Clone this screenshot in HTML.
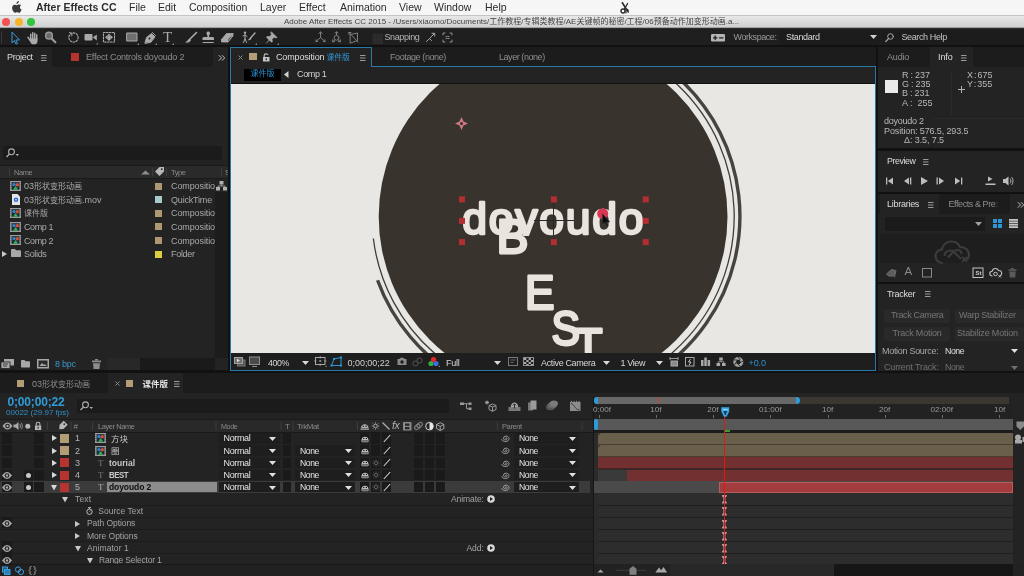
<!DOCTYPE html>
<html lang="zh">
<head>
<meta charset="utf-8">
<title>Adobe After Effects CC 2015</title>
<style>
*{box-sizing:border-box;margin:0;padding:0}
html,body{width:1024px;height:576px;overflow:hidden;background:#111}
body{position:relative;font-family:"Liberation Sans","Noto Sans CJK SC",sans-serif;color:#bdbdbd;font-size:9px;line-height:1;-webkit-font-smoothing:antialiased}
.a{position:absolute}
.t{position:absolute;white-space:nowrap;line-height:1}
svg{position:absolute;overflow:visible}
/* ---------- mac chrome ---------- */
#menubar{left:0;top:0;width:1024px;height:15.500px;background:#f6f6f6;border-bottom:1px solid #c4c4c4}
#menubar .t{color:#2b2b2b;font-size:10.5px;top:2px}
#titlebar{left:0;top:15.500px;width:1024px;height:12px;background:linear-gradient(#e8e8e8,#d0d0d0);border-bottom:1px solid #a0a0a0}
#toolbar{left:0;top:27.500px;width:1024px;height:17.500px;background:#1f1f1f;border-top:1px solid #2c2c2c}
.panel{background:#232323}
.tabs{background:#1c1c1c}
.blue{color:#2d9bd6}
.w{color:#e6e6e6}
.dim{color:#8c8c8c}
</style>
</head>
<body>
<div id="root" style="position:absolute;left:0;top:0;width:1024px;height:576px;overflow:hidden;will-change:transform;transform:translateZ(0)">
<svg width="0" height="0" style="left:-10px;top:-10px">
  <defs>
    <g id="compicon">
      <rect x="0" y="0" width="11" height="10" fill="#9c9c9c"/>
      <rect x="1.600" y="1.200" width="7.800" height="7.600" fill="#1b2a3a"/>
      <circle cx="4" cy="3.600" r="1.700" fill="#2e86d0"/>
      <circle cx="7.300" cy="3.800" r="1.700" fill="#d8502c"/>
      <path d="M3 8.800l2.600-3.800 2.600 3.800z" fill="#35b04a"/>
      <path d="M.5 1.500h.8M.5 3.500h.8M.5 5.500h.8M.5 7.500h.8M9.700 1.500h.8M9.700 3.500h.8M9.700 5.500h.8M9.700 7.500h.8" stroke="#444" stroke-width=".8"/>
    </g>
    <g id="eye">
      <path d="M0 3.500C1.800 1 3.500 0 5 0s3.200 1 5 3.500C8.200 6 6.500 7 5 7S1.800 6 0 3.500z" fill="#a8a8a8"/>
      <circle cx="5" cy="3.500" r="2.300" fill="#1c1c1c"/><circle cx="5" cy="3.500" r="1.200" fill="#a8a8a8"/>
    </g>
    <path id="ddn" d="M0 0h7l-3.500 4z"/>
    <path id="tri-r" d="M0 0l5 3-5 3z"/>
    <path id="tri-d" d="M0 0h6l-3 5.500z"/>
  </defs>
</svg>
<!-- ================= MAC MENU BAR ================= -->
<div id="menubar" class="a">
  <svg style="left:12px;top:1px" width="10" height="12" viewBox="0 0 10 12"><path d="M6.9 0c.1.8-.2 1.500-.7 2-.4.5-1.100.9-1.800.8-.1-.700.300-1.500.700-1.900C5.600.400 6.300 0 6.900 0zM9.300 4.100c-.900.500-1.300 1.300-1.300 2.200 0 1.100.700 2 1.600 2.300-.2.600-.5 1.200-.9 1.800-.5.700-1 1.400-1.800 1.400s-1-.5-1.900-.5-1.200.5-1.900.5c-.800 0-1.400-.800-1.900-1.500C.100 8.700-.3 6.500.600 5.100c.500-.9 1.400-1.400 2.300-1.400.800 0 1.400.5 2 .5.600 0 1.200-.6 2.200-.6.800 0 1.700.3 2.200.5z" fill="#3a3a3a"/></svg>
  <span class="t" style="left:36px;font-weight:bold">After Effects CC</span>
  <span class="t" style="left:129px">File</span>
  <span class="t" style="left:158px">Edit</span>
  <span class="t" style="left:189px">Composition</span>
  <span class="t" style="left:260px">Layer</span>
  <span class="t" style="left:299px">Effect</span>
  <span class="t" style="left:340px">Animation</span>
  <span class="t" style="left:399px">View</span>
  <span class="t" style="left:434px">Window</span>
  <span class="t" style="left:485px">Help</span>
  <svg style="left:620px;top:1.500px" width="10" height="12" fill="none" stroke="#2a2a2a" stroke-linecap="round"><path d="M2.300 .8l5.200 8.200" stroke-width="1.600"/><path d="M7.600 1.500l-3 5.200" stroke-width="1.300"/><circle cx="3" cy="9" r="2" stroke-width="1.400"/><path d="M6 7.500c1.200-.6 2.200 0 2.200 1v2M6 8v3" stroke-width="1.100"/></svg>
</div>
<!-- ================= WINDOW TITLE BAR ================= -->
<div id="titlebar" class="a">
  <div class="a" style="left:2px;top:2px;width:8px;height:8px;border-radius:50%;background:#f0524f"></div>
  <div class="a" style="left:15px;top:2px;width:8px;height:8px;border-radius:50%;background:#f6b42b"></div>
  <div class="a" style="left:27px;top:2px;width:8px;height:8px;border-radius:50%;background:#2fc53c"></div>
  <span class="t" style="left:284px;top:2px;font-size:8px;color:#444">Adobe After Effects CC 2015 - /Users/xiaomo/Documents/工作教程/专辑类教程/AE关键帧的秘密/工程/06预备动作加变形动画.a...</span>
</div>
<!-- ================= TOOLBAR ================= -->
<div id="toolbar" class="a">
  <div class="a" style="left:780px;top:1px;width:100px;height:15px;background:#1c1c1c"></div>
  <div class="a" style="left:881px;top:1px;width:143px;height:15px;background:#1c1c1c"></div>
  <svg style="left:0;top:0" width="1024" height="17" viewBox="0 28 1024 17" fill="none" stroke="#a9a9a9" stroke-width="1.1" stroke-linecap="round" stroke-linejoin="round">
    <!-- grip -->
    <path d="M1.500 31v11" stroke="#3a3a3a" stroke-dasharray="1 1"/>
    <!-- selection arrow -->
    <path d="M12 31.500v10.500l2.400-2.400 1.600 3.600 1.500-.7-1.600-3.500h3.300z" stroke="#3b9ad2" stroke-width="1"/>
    <!-- hand -->
    <g stroke="#a9a9a9" stroke-width="1.500" stroke-linecap="round"><path d="M30.700 33.300v5M32.700 31.800v6M34.700 32.300v6M36.700 33.800v5M28 36.300l2.200 3.200"/></g><path d="M29.800 37.500h7.700v2.500c0 1.500-.8 2.500-1.500 3.200h-4c-1-.8-2.200-2.700-2.200-4z" fill="#a9a9a9" stroke="none"/>
    <!-- zoom -->
    <circle cx="49" cy="34.700" r="3.400" stroke-width="1.400" stroke="#9a9a9a" fill="#6a6a6a"/><path d="M51.700 37.600l3.600 3.700" stroke-width="2.200" stroke="#9a9a9a"/>
    <!-- rotate -->
    <circle cx="73.500" cy="36.500" r="4.600" stroke-dasharray="1.600 1.400"/><path d="M69.500 31.500l2.500 1-.2 2.400" stroke-width="1"/>
    <!-- camera -->
    <rect x="84.500" y="33" width="8" height="6.500" rx="1" fill="#a9a9a9" stroke="none"/><path d="M93 36.200l3.800-2.800v6l-3.800-2.800z" fill="#a9a9a9" stroke="none"/><path d="M96 43.500h2v-2z" fill="#8a8a8a" stroke="none"/>
    <!-- pan behind -->
    <rect x="103.500" y="31.500" width="11" height="9.500" stroke-dasharray="1.600 1.300" stroke-width="1.100" stroke="#a9a9a9"/><g fill="#a9a9a9" stroke="none"><rect x="107.300" y="34.500" width="3.500" height="3.500"/><path d="M105 36.250l2.300-2v4zM113 36.250l-2.300-2v4zM109 32.500l-2 2h4zM109 40l-2-2h4z"/></g>
    <!-- rect -->
    <rect x="127" y="32" width="10" height="8" fill="#6f6f6f" stroke="#a9a9a9" stroke-width="1"/><path d="M137 44h2v-2z" fill="#8a8a8a" stroke="none"/>
    <!-- pen -->
    <path d="M145 42l1.500-5.500 5-4 3.500 3.500-4 5zM152.500 31.500l3 3" fill="#a9a9a9" stroke="#a9a9a9" stroke-width="1"/><circle cx="149.500" cy="37.500" r="1" fill="#1f1f1f" stroke="none"/><path d="M155 44h2v-2z" fill="#8a8a8a" stroke="none"/>
    <!-- brush -->
    <path d="M196.500 31.500l-6.500 6.500" stroke-width="1.600"/><path d="M189.500 37.500l1.500 1.500c-.5 2-3 3-6 2.500 2-.5 2.500-3 4.500-4z" fill="#a9a9a9" stroke="none"/>
    <!-- stamp -->
    <path d="M206.500 32c0-2 3.500-2 3.500 0 0 1.500-1 2-1 4h3.500c1 0 1.500.5 1.500 1.500v1.500h-11.500v-1.500c0-1 .5-1.500 1.500-1.500h3.500c0-2-1-2.500-1-4zM202.700 41h11v1h-11z" fill="#a9a9a9" stroke="none"/>
    <!-- eraser -->
    <path d="M221.500 38.500l5-6h6.500l-5 6zM221.500 38.500v2.500h6.500v-2.500M228 41l5-6v-2.500" fill="#a9a9a9" stroke="#a9a9a9" stroke-width=".8"/>
    <!-- roto brush -->
    <circle cx="245" cy="31.800" r="1.200" fill="#a9a9a9" stroke="none"/><path d="M245 33.500v4l-1.500 4M245 37.500l1.500 4M243 35l2-1 2 1.500" stroke-width="1"/><path d="M255 32l-4.500 5" stroke-width="1.400"/><path d="M250.500 36.500l1 1c-.5 1.500-2.500 2-4 1.500 1.500-.5 2-2 3-2.500z" fill="#a9a9a9" stroke="none"/><path d="M255 44h2v-2z" fill="#8a8a8a" stroke="none"/>
    <!-- pin -->
    <path d="M271.500 31l5.500 5.500-1.200.3-1.800-.6-2 2 .3 2.200-.8.800-5-5 .8-.8 2.200.3 2-2-.6-1.800zM269.500 38.500l-2.800 3.500" fill="#a9a9a9" stroke="#a9a9a9" stroke-width=".8"/><path d="M277 44h2v-2z" fill="#8a8a8a" stroke="none"/>
    <!-- axis icons -->
    <g stroke="#7f7f7f" stroke-width="1">
      <path d="M320.500 31v5.500l-4.500 4M320.500 36.500l4.500 4M319 32.500l1.500-1.700 1.500 1.700M316 38.800v1.700h1.700M325 38.800v1.700h-1.700"/>
      <path d="M336.500 31v3M333 40.500l1.800-1.500M340 40.500l-1.800-1.500M335 32.200l1.500-1.500 1.500 1.500M332.600 38.800v1.900h1.900M340.400 38.800v1.900h-1.900"/><circle cx="336.500" cy="36.800" r="2.400"/>
      <path d="M350.500 33.500l7-1.500v7.500l-7 2.500zM349 31.500l9 9.500M349 31.500h2M349 31.500v2"/>
    </g>
    <!-- snapping -->
    <rect x="372.500" y="32.500" width="10.500" height="10.500" fill="#2b2b2b" stroke="none"/>
    <path d="M426.500 40.500l3-3 2 2M429.500 37.500l5-5M432 32.300h2.700v2.700" stroke-width="1"/>
    <path d="M443 34v-2h2M450 32h2v2M452 39v2h-2M445 41h-2v-2M446 35.500h1M448 35.500h1M446 37.500h1M448 37.500h1" stroke="#8f8f8f" stroke-width="1"/>
    <!-- workspace icon -->
    <rect x="711" y="33" width="14" height="7.500" rx="1.200" fill="#b5b5b5" stroke="none"/><path d="M713.500 36.800h3.500M715.200 35v3.500M719.500 36.800h3.500" stroke="#1f1f1f" stroke-width="1.300"/>
    <!-- search -->
    <circle cx="890.500" cy="35.500" r="2.800" stroke-width="1"/><path d="M888.500 37.700l-2.700 2.800" stroke-width="1.200"/>
  </svg>
  <span class="t" style="left:163px;top:1px;font-family:'Liberation Serif',serif;font-size:15px;color:#a9a9a9">T</span>
  <svg style="left:172px;top:14px" width="2" height="2"><path d="M0 2h2v-2z" fill="#8a8a8a"/></svg>
  <span class="t" style="left:384.500px;top:4px;font-size:9px;color:#b4b4b4;letter-spacing:-0.393px/*fit*/">Snapping</span>
  <span class="t" style="left:733.500px;top:4px;font-size:9px;color:#9a9a9a;letter-spacing:-0.436px/*fit*/">Workspace:</span>
  <span class="t" style="left:786px;top:4px;font-size:9px;color:#d8d8d8;letter-spacing:-0.366px/*fit*/">Standard</span>
  <svg style="left:870px;top:6px" width="7" height="4"><path d="M0 0h7l-3.500 4z" fill="#d0d0d0"/></svg>
  <span class="t" style="left:901.500px;top:4px;font-size:9px;color:#c4c4c4;letter-spacing:-0.385px/*fit*/">Search Help</span>
</div>

<!-- ================= PROJECT PANEL ================= -->
<div id="project" class="a panel" style="left:0;top:47px;width:228px;height:323px;overflow:hidden">
  <div class="a tabs" style="left:0;top:0;width:213px;height:20px;border-radius:0 0 3px 3px"></div>
  <div class="a panel" style="left:0;top:0;width:52px;height:20px"></div>
  <span class="t w" style="left:7px;top:6px;font-size:9px;color:#dcdcdc;letter-spacing:-0.324px/*fit*/">Project</span>
  <svg style="left:41px;top:8px" width="6" height="6"><path d="M0 .5h5.500M0 3h5.500M0 5.500h5.500" stroke="#9a9a9a" stroke-width="1"/></svg>
  <div class="a" style="left:71px;top:6px;width:8px;height:8px;background:#b5342f"></div>
  <span class="t" style="left:86px;top:6px;font-size:9px;color:#8e8e8e;letter-spacing:-0.206px/*fit*/">Effect Controls doyoudo 2</span>
  <svg style="left:217.500px;top:6.500px" width="8" height="8" fill="none" stroke="#c0c0c0" stroke-width="1"><path d="M.8 1.200l2.700 2.700-2.700 2.700M4 1.200l2.700 2.700-2.700 2.700"/></svg>
  <!-- search -->
  <div class="a" style="left:3px;top:99px;width:219px;height:14px;background:#1b1b1b;border-radius:2px"></div>
  <svg style="left:6px;top:101px" width="14" height="10" fill="none" stroke="#b0b0b0"><circle cx="5.500" cy="3.800" r="2.900" stroke-width="1.100"/><path d="M3.500 6l-3 3" stroke-width="1.300"/><path d="M9.500 6h3.500l-1.750 2z" fill="#b0b0b0" stroke="none"/></svg>
  <!-- header -->
  <div class="a" style="left:0;top:118px;width:228px;height:14px;background:#2a2a2a;border-top:1px solid #191919;border-bottom:1px solid #191919"></div>
  <div class="a" style="left:9px;top:121px;width:1px;height:8px;background:#3c3c3c"></div>
  <span class="t" style="left:14px;top:121.500px;font-size:8px;color:#8a8a8a;letter-spacing:-0.45px/*fit*/;transform-origin:0 0;transform:scaleX(0.9277)/*fitfs*/">Name</span>
  <svg style="left:141px;top:123px" width="9" height="5"><path d="M0 4.500h9l-4.500-4z" fill="#8e8e8e"/></svg>
  <div class="a" style="left:152px;top:121px;width:1px;height:8px;background:#3c3c3c"></div>
  <svg style="left:154.500px;top:120px" width="9" height="9"><path d="M4.500 0h4.500v4.500l-4.500 4.500-4.500-4.500z" fill="#b8b8b8"/><circle cx="6.800" cy="2.200" r=".9" fill="#2a2a2a"/></svg>
  <div class="a" style="left:166px;top:121px;width:1px;height:8px;background:#3c3c3c"></div>
  <span class="t" style="left:171px;top:121.500px;font-size:8px;color:#8a8a8a;letter-spacing:-0.45px/*fit*/;transform-origin:0 0;transform:scaleX(0.9398)/*fitfs*/">Type</span>
  <div class="a" style="left:221px;top:121px;width:1px;height:8px;background:#3c3c3c"></div>
  <span class="t" style="left:225px;top:121.500px;font-size:8px;color:#8a8a8a">S</span>
  <!-- scrollbar gutter -->
  <div class="a" style="left:215px;top:145px;width:13px;height:166px;background:#1c1c1c"></div>
  <!-- rows -->
  <svg style="left:10px;top:134px" width="11" height="10"><use href="#compicon"/></svg>
  <span class="t" style="left:24px;top:135.0px;font-size:9px;color:#a9a9a9">03<span style="font-size:8px">形状变形动画</span></span>
  <div class="a" style="left:155px;top:135.500px;width:7px;height:7px;background:#ad9873"></div>
  <span class="t" style="left:171px;top:135.0px;font-size:9px;color:#a9a9a9;letter-spacing:-0.103px/*fit*/">Compositio</span>
  <svg style="left:216px;top:134px" width="11" height="10" fill="#b0b0b0"><rect x="3.500" y="0" width="4" height="3.500"/><rect x="0" y="6" width="4" height="3.500"/><rect x="7" y="6" width="4" height="3.500"/><path d="M5.500 3.500v1.500M2 6v-1h7v1" stroke="#b0b0b0" fill="none" stroke-width=".8"/></svg>

  <svg style="left:12px;top:147px" width="8" height="11"><path d="M0 0h5.500l2.500 2.500v8.500h-8z" fill="#e4e4e4"/><circle cx="4" cy="5.800" r="2.300" fill="#2a6fd0"/><circle cx="4" cy="5.800" r="1" fill="#9fc4f0"/></svg>
  <span class="t" style="left:24px;top:148.5px;font-size:9px;color:#a9a9a9">03<span style="font-size:8px">形状变形动画</span>.mov</span>
  <div class="a" style="left:155px;top:149px;width:7px;height:7px;background:#a5ccc8"></div>
  <span class="t" style="left:171px;top:148.5px;font-size:9px;color:#a9a9a9;letter-spacing:-0.186px/*fit*/">QuickTime</span>

  <svg style="left:10px;top:161px" width="11" height="10"><use href="#compicon"/></svg>
  <span class="t" style="left:24px;top:162.0px;font-size:9px;color:#a9a9a9"><span style="font-size:8px">课件版</span></span>
  <div class="a" style="left:155px;top:162.500px;width:7px;height:7px;background:#ad9873"></div>
  <span class="t" style="left:171px;top:162.0px;font-size:9px;color:#a9a9a9;letter-spacing:-0.103px/*fit*/">Compositio</span>

  <svg style="left:10px;top:174.500px" width="11" height="10"><use href="#compicon"/></svg>
  <span class="t" style="left:24px;top:176.0px;font-size:9px;color:#a9a9a9;letter-spacing:-0.378px/*fit*/">Comp 1</span>
  <div class="a" style="left:155px;top:176px;width:7px;height:7px;background:#ad9873"></div>
  <span class="t" style="left:171px;top:176.0px;font-size:9px;color:#a9a9a9;letter-spacing:-0.103px/*fit*/">Compositio</span>

  <svg style="left:10px;top:188px" width="11" height="10"><use href="#compicon"/></svg>
  <span class="t" style="left:24px;top:189.5px;font-size:9px;color:#a9a9a9;letter-spacing:-0.378px/*fit*/">Comp 2</span>
  <div class="a" style="left:155px;top:189.500px;width:7px;height:7px;background:#ad9873"></div>
  <span class="t" style="left:171px;top:189.5px;font-size:9px;color:#a9a9a9;letter-spacing:-0.103px/*fit*/">Compositio</span>

  <svg style="left:2px;top:204px" width="6" height="6"><use href="#tri-r" fill="#c8c8c8"/></svg>
  <svg style="left:11px;top:202px" width="10" height="8"><path d="M0 1c0-.6.400-1 1-1h3l1 1.200h4c.6 0 1 .4 1 1v4.800c0 .6-.4 1-1 1h-8c-.6 0-1-.4-1-1z" fill="#a8a8a8"/></svg>
  <span class="t" style="left:24px;top:203.0px;font-size:9px;color:#a9a9a9;letter-spacing:-0.336px/*fit*/">Solids</span>
  <div class="a" style="left:155px;top:203.500px;width:7px;height:7px;background:#dccf3f"></div>
  <span class="t" style="left:171px;top:203.0px;font-size:9px;color:#a9a9a9;letter-spacing:-0.294px/*fit*/">Folder</span>
  <!-- bottom bar -->
  <div class="a" style="left:107px;top:311px;width:33px;height:12px;background:#282828"></div>
  <div class="a" style="left:140px;top:311px;width:75px;height:12px;background:#1a1a1a"></div>
  <svg style="left:1px;top:312px" width="13" height="10" fill="#a8a8a8"><rect x="3" y="0" width="10" height="6.500"/><rect x="0" y="3" width="9" height="6.500" stroke="#232323" stroke-width=".8"/><path d="M2 5h5M2 7h4" stroke="#232323" stroke-width=".8"/></svg>
  <svg style="left:21px;top:313px" width="10" height="8"><path d="M0 1c0-.6.400-1 1-1h2.500l1 1.200h3.500c.6 0 1 .4 1 1v4.300c0 .6-.4 1-1 1h-7c-.6 0-1-.4-1-1z" fill="#a8a8a8"/></svg>
  <svg style="left:37px;top:312px" width="12" height="10"><rect x="0" y="0" width="12" height="9.500" fill="#a8a8a8"/><rect x="1.500" y="1.500" width="9" height="6.500" fill="#2a2a2a"/><path d="M2.500 7l2.500-3 2 2 1-1 1.500 2z" fill="#a8a8a8"/></svg>
  <span class="t" style="left:55px;top:312.500px;font-size:9px;color:#3b96cc;letter-spacing:-0.256px/*fit*/">8 bpc</span>
  <svg style="left:92px;top:312px" width="9" height="10" fill="#8c8c8c"><rect x="3" y="0" width="3" height="1.500"/><rect x="0" y="1.500" width="9" height="1.800"/><path d="M1 4.200h7l-.6 5.800h-5.800z"/></svg>
</div>

<!-- ================= COMPOSITION VIEWER ================= -->
<div id="viewer" class="a panel" style="left:230px;top:47px;width:646px;height:324px">
  <div class="a tabs" style="left:0;top:0;width:646px;height:20px"></div>
  <!-- active tab -->
  <div class="a panel" style="left:0;top:0;width:142px;height:20px;border:1px solid #2a78a6;border-bottom:none"></div>
  <svg style="left:8px;top:8px" width="5" height="5" stroke="#8a8a8a" stroke-width="1"><path d="M.5 .5l4 4M4.500 .5l-4 4"/></svg>
  <div class="a" style="left:19px;top:5.500px;width:7.500px;height:7.500px;background:#b39d76"></div>
  <svg style="left:33px;top:5.500px" width="7" height="9" fill="none"><path d="M1.200 4v-1.600c0-2 3.600-2 3.600-.3" stroke="#c4c4c4" stroke-width="1.100"/><rect x="0" y="4" width="6.500" height="4.500" fill="#c4c4c4"/><rect x="2.700" y="5.300" width="1.200" height="1.800" fill="#232323"/></svg>
  <span class="t" style="left:46px;top:6px;font-size:9px;color:#dedede;letter-spacing:-0.148px/*fit*/">Composition</span>
  <span class="t" style="left:96.500px;top:6.500px;font-size:7.800px;color:#3197d3">课件版</span>
  <svg style="left:130px;top:7.500px" width="6" height="6"><path d="M0 .5h5.500M0 3h5.500M0 5.500h5.500" stroke="#9a9a9a" stroke-width="1"/></svg>
  <span class="t" style="left:160px;top:6px;font-size:9px;color:#8e8e8e;letter-spacing:-0.403px/*fit*/">Footage (none)</span>
  <span class="t" style="left:269px;top:6px;font-size:9px;color:#8e8e8e;letter-spacing:-0.444px/*fit*/">Layer (none)</span>
  <!-- breadcrumb -->
  <div class="a" style="left:14px;top:21.500px;width:37px;height:12.500px;background:#000"></div>
  <span class="t" style="left:20.500px;top:23.300px;font-size:8px;color:#2f93cf">课件版</span>
  <svg style="left:54px;top:24px" width="5" height="7"><path d="M4.500 0v7l-4.500-3.500z" fill="#d0d0d0"/></svg>
  <span class="t" style="left:67px;top:23px;font-size:9px;color:#d4d4d4;letter-spacing:-0.369px/*fit*/">Comp 1</span>
  <div class="a" style="left:1px;top:36px;width:644px;height:1px;background:#111"></div>
  <!-- stage -->
  <div class="a" id="stage" style="left:1px;top:37px;width:644px;height:269px;background:#e9e7e3;overflow:hidden">
    <svg style="left:0;top:0" width="644" height="269" viewBox="231 84 644 269">
      <circle cx="553.1" cy="216.4" r="174.4" fill="#38332d"/>
      <!-- outer rings -->
      <path d="M553.10 35.30A181.10 181.10 0 1 1 373.35 238.47" fill="none" stroke="#403d39" stroke-width="1.300"/>
      <path d="M553.10 29.60A186.80 186.80 0 1 1 377.57 280.29" fill="none" stroke="#474440" stroke-width="3.400"/>
      <!-- animated letters -->
      <g font-family="'Liberation Sans',sans-serif" fill="#e9e5de" stroke="#e9e5de" stroke-width="2.800" stroke-linejoin="round" stroke-linecap="round">
        <clipPath id="cpd"><rect x="450" y="190" width="210" height="46"/></clipPath><text id="dyd" clip-path="url(#cpd)" x="462.300" y="233.900" font-size="44.500" letter-spacing="1.750" stroke-width="2.500">doyoudo</text>
        <text id="lB" x="496.500" y="252.600" font-size="49" textLength="32" lengthAdjust="spacingAndGlyphs">B</text>
        <text id="lE" x="525" y="309.300" font-size="49" textLength="29.500" lengthAdjust="spacingAndGlyphs">E</text>
        <text id="lS" x="551.500" y="345.200" font-size="49" textLength="28.500" lengthAdjust="spacingAndGlyphs">S</text>
        <text id="lT" x="574" y="362" font-size="49" textLength="28.500" lengthAdjust="spacingAndGlyphs">T</text>
      </g>
      <!-- anchor crosshair -->
      <path d="M534 220.500h40M553.500 203v33" stroke="#2a2622" stroke-width="1" fill="none"/>
      <!-- selection handles -->
      <g fill="#b32e30"><rect x="459" y="196.4" width="6" height="6"/><rect x="459" y="217.9" width="6" height="6"/><rect x="459" y="239.1" width="6" height="6"/><rect x="550.9" y="196.4" width="6" height="6"/><rect x="550.9" y="239.1" width="6" height="6"/><rect x="642.75" y="196.4" width="6" height="6"/><rect x="642.75" y="217.9" width="6" height="6"/><rect x="642.75" y="239.1" width="6" height="6"/></g>
      <!-- pink marker -->
      <g transform="translate(461.500 123.600)"><path d="M0-6.500l2 4.500 4.500 2-4.500 2-2 4.500-2-4.500-4.500-2 4.500-2z" fill="#cf7b82"/><circle r="1.500" fill="#3a2c2a"/></g>
      <!-- red dot + cursor -->
      <circle cx="602.700" cy="213.700" r="5.500" fill="#da3553"/>
      <path d="M602.300 213.500v11.500l2.600-2.400 1.800 4 1.600-.7-1.800-3.900h3.500z" fill="#0c0c0c" stroke="#555" stroke-width=".4"/>
    </svg>
  </div>
  <!-- footer -->
  <div class="a" style="left:1px;top:306px;width:644px;height:17px;background:#1e1e1e"></div>
  <svg style="left:1px;top:306px" width="644" height="17" viewBox="231 353 644 17" fill="none" stroke="#8e8e8e" stroke-width="1">
    <rect x="237.500" y="360" width="7.500" height="6" fill="#555" stroke="#777"/><rect x="234.500" y="357.500" width="8" height="6" fill="#6e6e6e" stroke="#a0a0a0"/><path d="M237 358.800v3.400l3-1.700z" fill="#ddd" stroke="none"/>
    <rect x="249.500" y="357" width="10" height="7.500" fill="#4a4a4a" stroke="#8e8e8e"/><path d="M252 366.500h5" stroke="#8e8e8e"/>
    <rect x="315.500" y="357.500" width="9.500" height="7" stroke="#a8a8a8"/><path d="M320.200 356v2.500M320.200 363.500v2.500M314 361h2.500M324 361h2.500M319 361h2.400M320.200 360v2" stroke="#a8a8a8" stroke-width=".8"/><path d="M325 367h1.500v-1.500z" fill="#a8a8a8" stroke="none"/>
    <path d="M331.500 365.500l2.500-6.500 7-1.500v8z" stroke="#2d95d8"/><g fill="#2d95d8" stroke="none"><rect x="330.500" y="364.500" width="2" height="2"/><rect x="333" y="358" width="2" height="2"/><rect x="340" y="356.500" width="2" height="2"/><rect x="340" y="364.500" width="2" height="2"/></g>
    <path d="M397.500 359h2l1-1.200h3l1 1.200h2v6h-9z" fill="#8a8a8a" stroke="none"/><circle cx="402" cy="362" r="1.700" fill="#1e1e1e" stroke="none"/>
    <g stroke="#4a4a4a" stroke-width="1.100"><circle cx="415.500" cy="363.500" r="2.500"/><circle cx="419.500" cy="360.500" r="2.500"/></g>
    <circle cx="431" cy="363.500" r="2.600" fill="#2fb03c" stroke="none"/><circle cx="436" cy="363.500" r="2.600" fill="#3a6fe8" stroke="none"/><circle cx="433.500" cy="359.500" r="2.600" fill="#e02828" stroke="none"/><path d="M438.500 367h1.500v-1.500z" fill="#a8a8a8" stroke="none"/>
    <rect x="508.500" y="357.500" width="9" height="8" stroke="#7a7a7a"/><path d="M510.500 360h5M510.500 362.500h3" stroke="#7a7a7a" stroke-width=".8"/>
    <rect x="523.500" y="357.500" width="10" height="8" stroke="#8e8e8e"/><g fill="#a8a8a8" stroke="none"><rect x="524" y="358" width="2.300" height="2"/><rect x="528.600" y="358" width="2.300" height="2"/><rect x="526.300" y="360" width="2.300" height="2"/><rect x="530.900" y="360" width="2.300" height="2"/><rect x="524" y="362" width="2.300" height="2"/><rect x="528.600" y="362" width="2.300" height="2"/><rect x="526.300" y="364" width="2.300" height="1.500"/><rect x="530.900" y="364" width="2.300" height="1.500"/></g>
    <g stroke="#a8a8a8"><path d="M670 358.500h8M670 357v3M678 357v3" stroke-width=".9"/><rect x="671" y="361" width="6.500" height="5" fill="#8a8a8a" stroke="#a8a8a8"/></g>
    <rect x="685.500" y="357.500" width="8.500" height="8.500" stroke="#a8a8a8"/><path d="M690.500 359l-2 3h2.500l-1.800 3" stroke="#d0d0d0" stroke-width=".9"/>
    <g fill="#a8a8a8" stroke="none"><rect x="701" y="360" width="2.500" height="6"/><rect x="704.300" y="357.500" width="2.500" height="8.500"/><rect x="707.600" y="360" width="2.500" height="6"/></g>
    <g fill="#a8a8a8" stroke="none"><rect x="719.200" y="357.500" width="3.600" height="3"/><rect x="716.500" y="363" width="3.600" height="3"/><rect x="722" y="363" width="3.600" height="3"/></g><path d="M721 360.500v1.200M718.300 363v-1.300h5.500v1.300" stroke="#a8a8a8" stroke-width=".8"/>
    <circle cx="738.300" cy="362" r="5" fill="#a0a0a0" stroke="none"/><circle cx="738.300" cy="362" r="2.200" fill="#1e1e1e" stroke="none"/><path d="M738.300 357l2 3M743 361l-3.300 2M740.500 366.500l-2.800-2.600M734.500 365.300l1.800-3.400M734 359.800l3.800.4" stroke="#1e1e1e" stroke-width=".8"/>
  </svg>
  <span class="t" style="left:37.500px;top:311.700px;font-size:9px;color:#d8d8d8;letter-spacing:-0.45px/*fit*/;transform-origin:0 0;transform:scaleX(0.9791)/*fitfs*/">400%</span>
  <svg style="left:72px;top:314.200px" width="7" height="4"><use href="#ddn" fill="#d8d8d8"/></svg>
  <span class="t" style="left:117.500px;top:311.700px;font-size:9px;color:#d0d0d0;letter-spacing:-0.035px/*fit*/">0;00;00;22</span>
  <span class="t" style="left:216px;top:311.700px;font-size:9px;color:#d8d8d8;letter-spacing:-0.229px/*fit*/">Full</span>
  <svg style="left:264px;top:314.200px" width="7" height="4"><use href="#ddn" fill="#d8d8d8"/></svg>
  <span class="t" style="left:311px;top:311.700px;font-size:9px;color:#d8d8d8;letter-spacing:-0.364px/*fit*/">Active Camera</span>
  <svg style="left:373px;top:314.200px" width="7" height="4"><use href="#ddn" fill="#d8d8d8"/></svg>
  <span class="t" style="left:390.500px;top:311.700px;font-size:9px;color:#d8d8d8;letter-spacing:-0.377px/*fit*/">1 View</span>
  <svg style="left:426px;top:314.200px" width="7" height="4"><use href="#ddn" fill="#d8d8d8"/></svg>
  <span class="t" style="left:518.500px;top:311.700px;font-size:9px;color:#2f93cf;letter-spacing:-0.07px/*fit*/">+0.0</span>
  <div class="a" style="left:0;top:19px;width:646px;height:305px;border:1px solid #2a78a6;border-top:none"></div>
  <div class="a" style="left:141px;top:19px;width:505px;height:1px;background:#2a78a6"></div>
</div>

<!-- ================= RIGHT PANELS ================= -->
<div id="info" class="a panel" style="left:878px;top:47px;width:146px;height:101px;overflow:hidden">
  <div class="a tabs" style="left:0;top:0;width:146px;height:20px"></div>
  <div class="a panel" style="left:52px;top:0;width:43px;height:20px"></div>
  <span class="t" style="left:9px;top:6px;font-size:9px;color:#8e8e8e;letter-spacing:-0.166px/*fit*/">Audio</span>
  <span class="t" style="left:60px;top:6px;font-size:9px;color:#dedede;letter-spacing:-0.079px/*fit*/">Info</span>
  <svg style="left:83px;top:8px" width="6" height="6"><path d="M0 .5h5.500M0 3h5.500M0 5.500h5.500" stroke="#9a9a9a" stroke-width="1"/></svg>
  <div class="a" style="left:7px;top:33px;width:13px;height:13px;background:#ebebeb"></div>
  <div class="a" style="left:73px;top:25px;width:1px;height:42px;background:#2c2c2c"></div>
  <div class="a" style="left:55px;top:71px;width:91px;height:1px;background:#2a2a2a"></div>
  <span class="t" style="left:24px;top:23.7px;font-size:9px;color:#b9b9b9;word-spacing:-.5px">R : 237</span>
  <span class="t" style="left:24px;top:33.0px;font-size:9px;color:#b9b9b9;word-spacing:-.5px">G : 235</span>
  <span class="t" style="left:24px;top:42.4px;font-size:9px;color:#b9b9b9;word-spacing:-.5px">B : 231</span>
  <span class="t" style="left:24px;top:52.2px;font-size:9px;color:#b9b9b9">A :&nbsp; 255</span>
  <span class="t" style="left:89px;top:23.7px;font-size:9px;color:#b9b9b9;word-spacing:-1.5px">X : 675</span>
  <span class="t" style="left:89px;top:33.0px;font-size:9px;color:#b9b9b9;word-spacing:-1.5px">Y : 355</span>
  <svg style="left:80px;top:39px" width="7" height="7"><path d="M3.500 0v7M0 3.500h7" stroke="#b0b0b0" stroke-width="1"/></svg>
  <span class="t" style="left:6px;top:69.7px;font-size:9px;color:#b9b9b9;letter-spacing:-0.239px/*fit*/">doyoudo 2</span>
  <span class="t" style="left:6px;top:79.7px;font-size:9px;color:#b9b9b9;letter-spacing:-0.122px/*fit*/">Position: 576.5, 293.5</span>
  <span class="t" style="left:26px;top:89.2px;font-size:9px;color:#b9b9b9;letter-spacing:-0.095px/*fit*/">&#916;: 3.5, 7.5</span>
</div>
<div id="preview" class="a panel" style="left:878px;top:151px;width:146px;height:40.500px;overflow:hidden">
  <span class="t" style="left:9px;top:6px;font-size:9px;color:#dedede;letter-spacing:-0.45px/*fit*/;transform-origin:0 0;transform:scaleX(0.9823)/*fitfs*/">Preview</span>
  <svg style="left:45px;top:8px" width="6" height="6"><path d="M0 .5h5.500M0 3h5.500M0 5.500h5.500" stroke="#9a9a9a" stroke-width="1"/></svg>
  <svg style="left:0;top:24px" width="146" height="12" fill="#bdbdbd">
    <rect x="8" y="2.500" width="1.300" height="7"/><path d="M15 2.500v7l-5.200-3.500z"/>
    <path d="M31 2.500v7l-5-3.500z"/><rect x="32" y="2.500" width="1.300" height="7"/>
    <path d="M43 2v8l7-4z"/>
    <rect x="58.500" y="2.500" width="1.300" height="7"/><path d="M61 2.500v7l5-3.500z"/>
    <path d="M77 2.500v7l5.200-3.500z"/><rect x="83" y="2.500" width="1.300" height="7"/>
    <path d="M110 1.500v5l4.500-2.500z"/><rect x="107.500" y="8.500" width="10" height="1.500"/>
    <path d="M125 4h2.300l3.200-2.500v9l-3.200-2.500h-2.300z"/><path d="M132 3.500c1.200 1.200 1.200 3.800 0 5M133.500 2c2 2 2 6 0 8" fill="none" stroke="#bdbdbd" stroke-width=".9"/>
  </svg>
</div>
<div id="libraries" class="a panel" style="left:878px;top:194px;width:146px;height:88px;overflow:hidden">
  <div class="a tabs" style="left:0;top:0;width:132px;height:20px;border-radius:0 0 3px 0"></div>
  <div class="a panel" style="left:2px;top:0;width:59px;height:20px"></div>
  <span class="t" style="left:9px;top:6px;font-size:9px;color:#dedede;letter-spacing:-0.268px/*fit*/">Libraries</span>
  <svg style="left:50px;top:7.500px" width="6" height="6"><path d="M0 .5h5.500M0 3h5.500M0 5.500h5.500" stroke="#9a9a9a" stroke-width="1"/></svg>
  <span class="t" style="left:70.500px;top:6px;font-size:9px;color:#8e8e8e;letter-spacing:-0.428px/*fit*/">Effects &amp; Pre</span>
  <span class="t" style="left:117.800px;top:6px;font-size:9px;color:#555">:</span>
  <svg style="left:139px;top:7px" width="8" height="8" fill="none" stroke="#c0c0c0" stroke-width="1"><path d="M.8 1.200l2.700 2.700-2.700 2.700M4 1.200l2.700 2.700-2.700 2.700"/></svg>
  <div class="a" style="left:7px;top:23px;width:100px;height:14px;background:#1b1b1b"></div>
  <svg style="left:97px;top:28px" width="7" height="4"><use href="#ddn" fill="#a0a0a0"/></svg>
  <svg style="left:115px;top:25px" width="9" height="9" fill="#2d95d8"><rect x="0" y="0" width="4" height="4"/><rect x="5" y="0" width="4" height="4"/><rect x="0" y="5" width="4" height="4"/><rect x="5" y="5" width="4" height="4"/></svg>
  <svg style="left:131px;top:25px" width="9" height="9" fill="#c4c4c4"><rect x="0" y="0" width="9" height="1.800"/><rect x="0" y="2.400" width="9" height="1.800"/><rect x="0" y="4.800" width="9" height="1.800"/><rect x="0" y="7.200" width="9" height="1.800"/></svg>
  <div class="a" style="left:2px;top:40px;width:144px;height:29px;background:#1e1e1e"></div>
  <svg style="left:56px;top:44px" width="38" height="25" viewBox="0 0 38 25" fill="none" stroke="#3c3c3c" stroke-width="2.200"><path d="M9 25c-5 0-7.500-3.500-7.500-7s3-6.500 6.500-6.500c1-5 5-8 9.500-8 4 0 7 2 8.500 5.500 5 0 9 3 9 8 0 2-1 4-2 5"/><path d="M10.500 18c0-3.500 3-5.500 5.500-5.500 2 0 3.500 1 5 2.500l6 6M27.500 16c0-2.500-2-4-4-4s-3.500 1-4.500 2l-5 5.500"/><path d="M28 19l5 5M33 19l-5 5" stroke-width="1.800"/></svg>
  <svg style="left:6px;top:73px" width="140" height="12" fill="none" stroke="#6e6e6e" stroke-width="1">
    <g transform="translate(1.500 0)"><path d="M1 7l5-4.500 4 1-2 5.500h-5z" fill="#5c5c5c"/><path d="M10.500 3.500l-1.500 7"/></g>
    <rect x="38.500" y="1.500" width="9" height="8.500" stroke="#888"/>
    <rect x="89" y="1" width="10" height="9.500" stroke="#c4c4c4"/>
    <g transform="translate(-3.500 0)"><path d="M112 9c-1.800 0-2.700-1.200-2.700-2.400 0-1.400 1-2.300 2.300-2.300.400-1.700 1.800-2.800 3.400-2.800 1.500 0 2.500.800 3 2 1.800 0 3.200 1 3.200 2.800 0 1-.400 1.700-1 2.200" stroke="#c4c4c4" stroke-width="1.100"/><circle cx="115" cy="7" r="1.800" stroke="#c4c4c4"/><path d="M118 8l2.500 2.500M120.500 8l-2.500 2.500" stroke="#c4c4c4"/></g>
    <g fill="#5a5a5a" stroke="none" transform="translate(-4 0)"><rect x="131" y="1" width="3" height="1.300"/><rect x="128.500" y="2.300" width="8" height="1.600"/><path d="M129.300 4.600h6.400l-.5 6h-5.400z"/></g>
  </svg>
  <span class="t" style="left:26.500px;top:72px;font-size:11.500px;color:#8a8a8a">A</span>
  <span class="t" style="left:97.500px;top:76px;font-size:6px;color:#d0d0d0;font-weight:bold">St</span>
</div>
<div id="tracker" class="a panel" style="left:878px;top:284px;width:146px;height:87px;overflow:hidden">
  <span class="t" style="left:9px;top:6px;font-size:9px;color:#dedede;letter-spacing:-0.296px/*fit*/">Tracker</span>
  <svg style="left:46.500px;top:7px" width="6" height="6"><path d="M0 .5h5.500M0 3h5.500M0 5.500h5.500" stroke="#9a9a9a" stroke-width="1"/></svg>
  <div class="a" style="left:6px;top:24.500px;width:66px;height:14px;background:#292929;border-radius:2px"></div>
  <div class="a" style="left:77px;top:24.500px;width:69px;height:14px;background:#292929;border-radius:2px"></div>
  <div class="a" style="left:6px;top:42.500px;width:66px;height:14px;background:#292929;border-radius:2px"></div>
  <div class="a" style="left:77px;top:42.500px;width:69px;height:14px;background:#292929;border-radius:2px"></div>
  <span class="t" style="left:13px;top:27px;font-size:9px;color:#767676;letter-spacing:-0.357px/*fit*/">Track Camera</span>
  <span class="t" style="left:81px;top:27px;font-size:9px;color:#767676;letter-spacing:-0.259px/*fit*/">Warp Stabilizer</span>
  <span class="t" style="left:14.500px;top:45px;font-size:9px;color:#767676;letter-spacing:-0.216px/*fit*/">Track Motion</span>
  <span class="t" style="left:79px;top:45px;font-size:9px;color:#767676;letter-spacing:-0.165px/*fit*/">Stabilize Motion</span>
  <span class="t" style="left:4px;top:62.500px;font-size:9px;color:#a8a8a8;letter-spacing:-0.295px/*fit*/">Motion Source:</span>
  <span class="t" style="left:67px;top:62.500px;font-size:9px;color:#e0e0e0;letter-spacing:-0.45px/*fit*/;transform-origin:0 0;transform:scaleX(0.976)/*fitfs*/">None</span>
  <svg style="left:133px;top:65px" width="7" height="4"><use href="#ddn" fill="#e0e0e0"/></svg>
  <span class="t" style="left:6px;top:78.500px;font-size:9px;color:#707070;letter-spacing:-0.158px/*fit*/">Current Track:</span>
  <span class="t" style="left:67px;top:78.500px;font-size:9px;color:#707070;letter-spacing:-0.45px/*fit*/;transform-origin:0 0;transform:scaleX(0.976)/*fitfs*/">None</span>
  <svg style="left:133px;top:81.500px" width="7" height="4"><use href="#ddn" fill="#707070"/></svg>
</div>

<!-- ================= TIMELINE ================= -->
<div id="timeline" class="a panel" style="left:0;top:373px;width:1024px;height:203px;overflow:hidden">
  <div class="a tabs" style="left:0;top:0;width:1024px;height:20px"></div>
  <div class="a panel" style="left:108px;top:0;width:75px;height:20px"></div>
  <div class="a" style="left:17px;top:6.500px;width:7px;height:7px;background:#b39d76"></div>
  <span class="t" style="left:32px;top:6.500px;font-size:9px;color:#8e8e8e">03<span style="font-size:8px">形状变形动画</span></span>
  <svg style="left:114.500px;top:8px" width="5" height="5" stroke="#8a8a8a" stroke-width="1"><path d="M.5 .5l4 4M4.500 .5l-4 4"/></svg>
  <div class="a" style="left:126px;top:6.500px;width:7px;height:7px;background:#b39d76"></div>
  <span class="t" style="left:142.500px;top:6.500px;font-size:8.500px;color:#e2e2e2;font-weight:bold">课件版</span>
  <svg style="left:173.500px;top:7.500px" width="6" height="6"><path d="M0 .5h5.500M0 3h5.500M0 5.500h5.500" stroke="#9a9a9a" stroke-width="1"/></svg>
  <span class="t" style="left:7.500px;top:23px;font-size:12px;color:#2f9bd8;font-weight:bold;letter-spacing:-0.172px/*fit*/">0;00;00;22</span>
  <span class="t" style="left:6px;top:36px;font-size:8px;color:#2f8fc8;letter-spacing:0.017px/*fit*/">00022 (29.97 fps)</span>
  <div class="a" style="left:77px;top:26px;width:372px;height:13.500px;background:#1b1b1b;border-radius:2px"></div>
  <svg style="left:80px;top:28px" width="14" height="10" fill="none" stroke="#b0b0b0"><circle cx="5.500" cy="3.800" r="2.900" stroke-width="1.100"/><path d="M3.500 6l-3 3" stroke-width="1.300"/><path d="M9.500 6h3.500l-1.750 2z" fill="#b0b0b0" stroke="none"/></svg>
  <svg style="left:455px;top:25px" width="135" height="16" viewBox="455 398 135 16" fill="#9a9a9a" stroke="none">
    <rect x="460" y="402.500" width="4" height="2.500"/><path d="M464 403.700h2.500v5h2M466.500 403.700h2" fill="none" stroke="#9a9a9a" stroke-width="1"/><rect x="468.500" y="402.500" width="3" height="2.500"/><rect x="468.500" y="407.500" width="3" height="2.500"/>
    <path d="M487 400.500v4M485 402.500h4M485.600 401l2.800 3M488.400 401l-2.800 3" fill="none" stroke="#b0b0b0" stroke-width=".8"/><path d="M489 405.500l3.500-1.500 3.500 1.500v4l-3.500 1.800-3.500-1.800zM489 405.500l3.500 1.500 3.500-1.500M492.500 407v4.300" fill="none" stroke="#9a9a9a" stroke-width="1"/>
    <path d="M508.500 411h12v-4h-12z" fill="#7a7a7a"/><path d="M510.800 407c0-6 7.400-6 7.400 0z" fill="#a8a8a8"/><path d="M514.500 404v4.500M512.800 405.500l1.700-1.700 1.700 1.700" stroke="#2a2a2a" stroke-width="1" fill="none"/>
    <rect x="528" y="402.500" width="5" height="8" fill="#777"/><rect x="530.500" y="400.500" width="6" height="9"/>
    <ellipse cx="550.500" cy="407" rx="4.500" ry="3.300" fill="#555"/><ellipse cx="552.500" cy="405" rx="4.500" ry="3.300" fill="#6c6c6c"/><ellipse cx="554" cy="403.500" rx="4" ry="3" fill="#7c7c7c"/>
    <rect x="570" y="402" width="10.500" height="9" fill="#8c8c8c"/><path d="M571.500 400.800v1.500M574 400.800v1.500M576.500 400.800v1.500M579 400.800v1.500" stroke="#8c8c8c" stroke-width="1"/><path d="M571 403.500c3 0 3.500 6 8.500 6.500" stroke="#3a3a3a" stroke-width="1" fill="none"/>
  </svg>
  <div class="a" style="left:0;top:45.5px;width:593px;height:14px;background:#292929;border-top:1px solid #1a1a1a;border-bottom:1px solid #1a1a1a"></div>
  <svg style="left:0;top:46px" width="590" height="14" viewBox="0 419 590 14">
    <use href="#eye" x="2.500" y="422.500" transform="scale(1)"/>
    <path d="M13.500 424.500h2l3-2.500v8l-3-2.500h-2z" fill="#a8a8a8"/><path d="M19.800 424c.8 1 .8 3 0 4M21.200 422.800c1.500 1.800 1.500 4.700 0 6.500" fill="none" stroke="#a8a8a8" stroke-width=".8"/>
    <circle cx="27.800" cy="426.200" r="2.500" fill="#b8b8b8"/>
    <path d="M36.300 425.500v-1.500c0-2.400 3.600-2.400 3.600 0v1.500" fill="none" stroke="#b8b8b8" stroke-width="1.100"/><rect x="35" y="425.500" width="6.200" height="4.500" fill="#b8b8b8"/><rect x="37.500" y="426.700" width="1.200" height="2" fill="#292929"/>
    <path d="M47.500 422v8M71 422v8M92.500 422v8M216 422v8M281 422v8M293 422v8M357.500 422v8M497.500 422v8M582 422v8" stroke="#3d3d3d" stroke-width="1"/>
    <g transform="translate(62.500 426) rotate(45)"><path d="M-2.800 -4.500h5.600v6l-2.800 3-2.800-3z" fill="#b8b8b8"/><circle cx="0" cy="-2.500" r=".9" fill="#292929"/></g>
    <g fill="#b0b0b0">
      <path d="M361 428c0-5 7.500-5 7.500 0zM360.500 428.500h8.500v1.200h-8.500z"/><circle cx="363.300" cy="426.300" r=".8" fill="#292929"/><circle cx="366.200" cy="426.300" r=".8" fill="#292929"/>
      <circle cx="375.500" cy="426" r="1.800" fill="none" stroke="#b0b0b0" stroke-width=".9"/><path d="M375.500 422.300v1.200M375.500 428.500v1.200M371.800 426h1.200M378 426h1.200M372.900 423.400l.9.900M377.200 427.700l.9.900M378.100 423.400l-.9.900M373.800 427.700l-.9.900" stroke="#b0b0b0" stroke-width=".8"/>
      <path d="M382.500 422.500l7 7" stroke="#b0b0b0" stroke-width="1.200"/>
      <rect x="403" y="422" width="8.500" height="8.500" rx=".8" fill="#8a8a8a"/><rect x="405" y="423.500" width="4.500" height="2.300" fill="#292929"/><rect x="405" y="427" width="4.500" height="2.300" fill="#292929"/>
      <g transform="translate(418.500 426) rotate(-40)"><rect x="-4.500" y="-2" width="6" height="4" rx="2" fill="none" stroke="#808080" stroke-width="1.100"/><rect x="-1.500" y="-2" width="6" height="4" rx="2" fill="none" stroke="#808080" stroke-width="1.100"/></g>
      <circle cx="429.500" cy="426.200" r="3.800" fill="#e8e8e8"/><path d="M429.500 422.400a3.800 3.800 0 0 0 0 7.600z" fill="#222"/><circle cx="429.500" cy="426.200" r="3.800" fill="none" stroke="#e8e8e8" stroke-width=".8"/>
      <path d="M436.500 424.500l3.700-1.800 3.700 1.800v4l-3.700 2-3.700-2zM436.500 424.500l3.700 1.800 3.700-1.800M440.200 426.300v4.200" fill="none" stroke="#b0b0b0" stroke-width=".9"/>
    </g>
  </svg>
  <span class="t" style="left:392px;top:47.3px;font-size:10.500px;color:#b0b0b0;font-style:italic;letter-spacing:-.3px">fx</span>
  <span class="t" style="left:73.5px;top:49.7px;font-size:8px;color:#8a8a8a">#</span>
  <span class="t" style="left:97.5px;top:49.7px;font-size:8px;color:#8a8a8a;letter-spacing:-0.45px/*fit*/;transform-origin:0 0;transform:scaleX(0.934)/*fitfs*/">Layer Name</span>
  <span class="t" style="left:220.5px;top:49.7px;font-size:8px;color:#8a8a8a;letter-spacing:-0.45px/*fit*/;transform-origin:0 0;transform:scaleX(0.8943)/*fitfs*/">Mode</span>
  <span class="t" style="left:285px;top:49.7px;font-size:8px;color:#8a8a8a">T</span>
  <span class="t" style="left:297px;top:49.7px;font-size:8px;color:#8a8a8a;letter-spacing:-0.45px/*fit*/;transform-origin:0 0;transform:scaleX(0.9962)/*fitfs*/">TrkMat</span>
  <span class="t" style="left:502px;top:49.7px;font-size:8px;color:#8a8a8a;letter-spacing:-0.45px/*fit*/;transform-origin:0 0;transform:scaleX(0.9458)/*fitfs*/">Parent</span>
  <div class="a" style="left:2px;top:60px;width:9.5px;height:10.6px;background:#1a1a1a"></div>
  <div class="a" style="left:34px;top:60px;width:9.5px;height:10.6px;background:#1a1a1a"></div>
  <svg style="left:51.500px;top:62.3px" width="6" height="6"><use href="#tri-r" fill="#d8d8d8"/></svg>
  <div class="a" style="left:60px;top:60.8px;width:8.500px;height:9px;background:#b39d76"></div>
  <span class="t" style="left:75px;top:61.3px;font-size:9px;color:#b4b4b4">1</span>
  <svg style="left:94.500px;top:60.3px" width="11" height="10"><use href="#compicon"/></svg>
  <span class="t" style="left:111px;top:61.8px;font-size:8.500px;color:#c4c4c4">方块</span>
  <div class="a" style="left:219px;top:60px;width:61px;height:10.6px;background:#1e1e1e"></div>
  <span class="t" style="left:223.500px;top:61.3px;font-size:9px;color:#e4e4e4;letter-spacing:-0.369px/*fit*/">Normal</span>
  <svg style="left:269px;top:63.6px" width="7" height="4"><use href="#ddn" fill="#e0e0e0"/></svg>
  <div class="a" style="left:283px;top:60px;width:8px;height:10.6px;background:#1a1a1a"></div>
  <div class="a" style="left:360.3px;top:60px;width:9.2px;height:10.6px;background:#1a1a1a"></div>
  <div class="a" style="left:371px;top:60px;width:9.2px;height:10.6px;background:#1a1a1a"></div>
  <div class="a" style="left:381.8px;top:60px;width:9.2px;height:10.6px;background:#1a1a1a"></div>
  <div class="a" style="left:414px;top:60px;width:9px;height:10.6px;background:#1a1a1a"></div>
  <div class="a" style="left:425px;top:60px;width:9px;height:10.6px;background:#1a1a1a"></div>
  <div class="a" style="left:435.7px;top:60px;width:9px;height:10.6px;background:#1a1a1a"></div>
  <svg style="left:361px;top:61.6px" width="8" height="8" fill="#c4c4c4"><path d="M.5 5c0-4.500 7-4.500 7 0zM0 5.400h8v1.200h-8z"/><circle cx="2.800" cy="3.600" r=".75" fill="#1a1a1a"/><circle cx="5.300" cy="3.600" r=".75" fill="#1a1a1a"/><path d="M2 6.600v1M4 6.600v1M6 6.600v1" stroke="#c4c4c4" stroke-width=".8"/></svg>
  <svg style="left:382.500px;top:60.8px" width="8" height="9"><path d="M.8 8l6.400-7" stroke="#d0d0d0" stroke-width="1.100"/></svg>
  <svg style="left:500.500px;top:61px" width="9" height="9" fill="none" stroke="#a8a8a8" stroke-width=".9"><path d="M4.500 4.500c0-1 1.500-1 1.500 0 0 2-3.500 2-3.500-.3 0-2.800 5.500-2.800 5.500.5 0 3.500-6.500 4-7.300.5"/></svg>
  <div class="a" style="left:514px;top:60px;width:64.500px;height:10.6px;background:#1e1e1e"></div>
  <span class="t" style="left:519px;top:61.3px;font-size:9px;color:#e4e4e4;letter-spacing:-0.45px/*fit*/;transform-origin:0 0;transform:scaleX(0.9574)/*fitfs*/">None</span>
  <svg style="left:569px;top:63.6px" width="7" height="4"><use href="#ddn" fill="#e0e0e0"/></svg>
  <div class="a" style="left:2px;top:72.2px;width:9.5px;height:10.6px;background:#1a1a1a"></div>
  <div class="a" style="left:34px;top:72.2px;width:9.5px;height:10.6px;background:#1a1a1a"></div>
  <svg style="left:51.500px;top:74.5px" width="6" height="6"><use href="#tri-r" fill="#d8d8d8"/></svg>
  <div class="a" style="left:60px;top:73.0px;width:8.500px;height:9px;background:#b39d76"></div>
  <span class="t" style="left:75px;top:73.5px;font-size:9px;color:#b4b4b4">2</span>
  <svg style="left:94.500px;top:72.5px" width="11" height="10"><use href="#compicon"/></svg>
  <span class="t" style="left:111px;top:74.0px;font-size:8.500px;color:#c4c4c4">圈</span>
  <div class="a" style="left:219px;top:72.2px;width:61px;height:10.6px;background:#1e1e1e"></div>
  <span class="t" style="left:223.500px;top:73.5px;font-size:9px;color:#e4e4e4;letter-spacing:-0.369px/*fit*/">Normal</span>
  <svg style="left:269px;top:75.8px" width="7" height="4"><use href="#ddn" fill="#e0e0e0"/></svg>
  <div class="a" style="left:283px;top:72.2px;width:8px;height:10.6px;background:#1a1a1a"></div>
  <div class="a" style="left:295px;top:72.2px;width:60px;height:10.6px;background:#1e1e1e"></div>
  <span class="t" style="left:299.500px;top:73.5px;font-size:9px;color:#e4e4e4;letter-spacing:-0.45px/*fit*/;transform-origin:0 0;transform:scaleX(0.9574)/*fitfs*/">None</span>
  <svg style="left:344.500px;top:75.8px" width="7" height="4"><use href="#ddn" fill="#e0e0e0"/></svg>
  <div class="a" style="left:360.3px;top:72.2px;width:9.2px;height:10.6px;background:#1a1a1a"></div>
  <div class="a" style="left:371px;top:72.2px;width:9.2px;height:10.6px;background:#1a1a1a"></div>
  <div class="a" style="left:381.8px;top:72.2px;width:9.2px;height:10.6px;background:#1a1a1a"></div>
  <div class="a" style="left:414px;top:72.2px;width:9px;height:10.6px;background:#1a1a1a"></div>
  <div class="a" style="left:425px;top:72.2px;width:9px;height:10.6px;background:#1a1a1a"></div>
  <div class="a" style="left:435.7px;top:72.2px;width:9px;height:10.6px;background:#1a1a1a"></div>
  <svg style="left:361px;top:73.8px" width="8" height="8" fill="#c4c4c4"><path d="M.5 5c0-4.500 7-4.500 7 0zM0 5.400h8v1.200h-8z"/><circle cx="2.800" cy="3.600" r=".75" fill="#1a1a1a"/><circle cx="5.300" cy="3.600" r=".75" fill="#1a1a1a"/><path d="M2 6.600v1M4 6.600v1M6 6.600v1" stroke="#c4c4c4" stroke-width=".8"/></svg>
  <svg style="left:382.500px;top:73.0px" width="8" height="9"><path d="M.8 8l6.400-7" stroke="#d0d0d0" stroke-width="1.100"/></svg>
  <svg style="left:500.500px;top:73.2px" width="9" height="9" fill="none" stroke="#a8a8a8" stroke-width=".9"><path d="M4.500 4.500c0-1 1.500-1 1.500 0 0 2-3.500 2-3.500-.3 0-2.800 5.500-2.800 5.500.5 0 3.500-6.500 4-7.300.5"/></svg>
  <div class="a" style="left:514px;top:72.2px;width:64.500px;height:10.6px;background:#1e1e1e"></div>
  <span class="t" style="left:519px;top:73.5px;font-size:9px;color:#e4e4e4;letter-spacing:-0.45px/*fit*/;transform-origin:0 0;transform:scaleX(0.9574)/*fitfs*/">None</span>
  <svg style="left:569px;top:75.8px" width="7" height="4"><use href="#ddn" fill="#e0e0e0"/></svg>
  <div class="a" style="left:2px;top:84.5px;width:9.5px;height:10.6px;background:#1a1a1a"></div>
  <div class="a" style="left:34px;top:84.5px;width:9.5px;height:10.6px;background:#1a1a1a"></div>
  <svg style="left:51.500px;top:86.8px" width="6" height="6"><use href="#tri-r" fill="#d8d8d8"/></svg>
  <div class="a" style="left:60px;top:85.3px;width:8.500px;height:9px;background:#b5342f"></div>
  <span class="t" style="left:75px;top:85.8px;font-size:9px;color:#b4b4b4">3</span>
  <span class="t" style="left:98px;top:85.8px;font-size:9px;color:#7a7a7a;font-family:'Liberation Serif',serif">T</span>
  <span class="t" style="left:109px;top:85.8px;font-size:9px;color:#c8c8c8;font-weight:bold;font-size:8.500px;letter-spacing:0.017px/*fit*/">tourial</span>
  <div class="a" style="left:219px;top:84.5px;width:61px;height:10.6px;background:#1e1e1e"></div>
  <span class="t" style="left:223.500px;top:85.8px;font-size:9px;color:#e4e4e4;letter-spacing:-0.369px/*fit*/">Normal</span>
  <svg style="left:269px;top:88.1px" width="7" height="4"><use href="#ddn" fill="#e0e0e0"/></svg>
  <div class="a" style="left:283px;top:84.5px;width:8px;height:10.6px;background:#1a1a1a"></div>
  <div class="a" style="left:295px;top:84.5px;width:60px;height:10.6px;background:#1e1e1e"></div>
  <span class="t" style="left:299.500px;top:85.8px;font-size:9px;color:#e4e4e4;letter-spacing:-0.45px/*fit*/;transform-origin:0 0;transform:scaleX(0.9574)/*fitfs*/">None</span>
  <svg style="left:344.500px;top:88.1px" width="7" height="4"><use href="#ddn" fill="#e0e0e0"/></svg>
  <div class="a" style="left:360.3px;top:84.5px;width:9.2px;height:10.6px;background:#1a1a1a"></div>
  <div class="a" style="left:371px;top:84.5px;width:9.2px;height:10.6px;background:#1a1a1a"></div>
  <div class="a" style="left:381.8px;top:84.5px;width:9.2px;height:10.6px;background:#1a1a1a"></div>
  <div class="a" style="left:414px;top:84.5px;width:9px;height:10.6px;background:#1a1a1a"></div>
  <div class="a" style="left:425px;top:84.5px;width:9px;height:10.6px;background:#1a1a1a"></div>
  <div class="a" style="left:435.7px;top:84.5px;width:9px;height:10.6px;background:#1a1a1a"></div>
  <svg style="left:361px;top:86.1px" width="8" height="8" fill="#c4c4c4"><path d="M.5 5c0-4.500 7-4.500 7 0zM0 5.400h8v1.200h-8z"/><circle cx="2.800" cy="3.600" r=".75" fill="#1a1a1a"/><circle cx="5.300" cy="3.600" r=".75" fill="#1a1a1a"/><path d="M2 6.600v1M4 6.600v1M6 6.600v1" stroke="#c4c4c4" stroke-width=".8"/></svg>
  <svg style="left:371.500px;top:85.8px" width="8" height="8" fill="none" stroke="#6c6c6c" stroke-width=".8"><circle cx="4" cy="4" r="1.600"/><path d="M4 .5v1.200M4 6.300v1.200M.5 4h1.200M6.300 4h1.200M1.500 1.500l.9.900M5.600 5.600l.9.900M6.500 1.500l-.9.900M2.400 5.600l-.9.900"/></svg>
  <svg style="left:382.500px;top:85.3px" width="8" height="9"><path d="M.8 8l6.400-7" stroke="#d0d0d0" stroke-width="1.100"/></svg>
  <svg style="left:500.500px;top:85.5px" width="9" height="9" fill="none" stroke="#a8a8a8" stroke-width=".9"><path d="M4.500 4.500c0-1 1.500-1 1.500 0 0 2-3.500 2-3.500-.3 0-2.800 5.500-2.800 5.500.5 0 3.500-6.500 4-7.300.5"/></svg>
  <div class="a" style="left:514px;top:84.5px;width:64.500px;height:10.6px;background:#1e1e1e"></div>
  <span class="t" style="left:519px;top:85.8px;font-size:9px;color:#e4e4e4;letter-spacing:-0.45px/*fit*/;transform-origin:0 0;transform:scaleX(0.9574)/*fitfs*/">None</span>
  <svg style="left:569px;top:88.1px" width="7" height="4"><use href="#ddn" fill="#e0e0e0"/></svg>
  <div class="a" style="left:2px;top:96.7px;width:9.5px;height:10.6px;background:#1a1a1a"></div>
  <div class="a" style="left:23.5px;top:96.7px;width:9px;height:10.6px;background:#1a1a1a"></div>
  <div class="a" style="left:34px;top:96.7px;width:9.5px;height:10.6px;background:#1a1a1a"></div>
  <svg style="left:2px;top:98.5px" width="10" height="7"><use href="#eye"/></svg>
  <div class="a" style="left:25.500px;top:99.5px;width:5px;height:5px;border-radius:50%;background:#c8c8c8"></div>
  <svg style="left:51.500px;top:99.0px" width="6" height="6"><use href="#tri-r" fill="#d8d8d8"/></svg>
  <div class="a" style="left:60px;top:97.5px;width:8.500px;height:9px;background:#b5342f"></div>
  <span class="t" style="left:75px;top:98.0px;font-size:9px;color:#b4b4b4">4</span>
  <span class="t" style="left:98px;top:98.0px;font-size:9px;color:#7a7a7a;font-family:'Liberation Serif',serif">T</span>
  <span class="t" style="left:109px;top:98.0px;font-size:9px;color:#c8c8c8;font-weight:bold;font-size:8.500px;letter-spacing:-0.45px/*fit*/;transform-origin:0 0;transform:scaleX(0.9218)/*fitfs*/">BEST</span>
  <div class="a" style="left:219px;top:96.7px;width:61px;height:10.6px;background:#1e1e1e"></div>
  <span class="t" style="left:223.500px;top:98.0px;font-size:9px;color:#e4e4e4;letter-spacing:-0.369px/*fit*/">Normal</span>
  <svg style="left:269px;top:100.3px" width="7" height="4"><use href="#ddn" fill="#e0e0e0"/></svg>
  <div class="a" style="left:283px;top:96.7px;width:8px;height:10.6px;background:#1a1a1a"></div>
  <div class="a" style="left:295px;top:96.7px;width:60px;height:10.6px;background:#1e1e1e"></div>
  <span class="t" style="left:299.500px;top:98.0px;font-size:9px;color:#e4e4e4;letter-spacing:-0.45px/*fit*/;transform-origin:0 0;transform:scaleX(0.9574)/*fitfs*/">None</span>
  <svg style="left:344.500px;top:100.3px" width="7" height="4"><use href="#ddn" fill="#e0e0e0"/></svg>
  <div class="a" style="left:360.3px;top:96.7px;width:9.2px;height:10.6px;background:#1a1a1a"></div>
  <div class="a" style="left:371px;top:96.7px;width:9.2px;height:10.6px;background:#1a1a1a"></div>
  <div class="a" style="left:381.8px;top:96.7px;width:9.2px;height:10.6px;background:#1a1a1a"></div>
  <div class="a" style="left:414px;top:96.7px;width:9px;height:10.6px;background:#1a1a1a"></div>
  <div class="a" style="left:425px;top:96.7px;width:9px;height:10.6px;background:#1a1a1a"></div>
  <div class="a" style="left:435.7px;top:96.7px;width:9px;height:10.6px;background:#1a1a1a"></div>
  <svg style="left:361px;top:98.3px" width="8" height="8" fill="#c4c4c4"><path d="M.5 5c0-4.500 7-4.500 7 0zM0 5.400h8v1.200h-8z"/><circle cx="2.800" cy="3.600" r=".75" fill="#1a1a1a"/><circle cx="5.300" cy="3.600" r=".75" fill="#1a1a1a"/><path d="M2 6.600v1M4 6.600v1M6 6.600v1" stroke="#c4c4c4" stroke-width=".8"/></svg>
  <svg style="left:371.500px;top:98.0px" width="8" height="8" fill="none" stroke="#6c6c6c" stroke-width=".8"><circle cx="4" cy="4" r="1.600"/><path d="M4 .5v1.200M4 6.300v1.200M.5 4h1.200M6.300 4h1.200M1.500 1.500l.9.900M5.600 5.600l.9.900M6.500 1.500l-.9.900M2.400 5.600l-.9.900"/></svg>
  <svg style="left:382.500px;top:97.5px" width="8" height="9"><path d="M.8 8l6.400-7" stroke="#d0d0d0" stroke-width="1.100"/></svg>
  <svg style="left:500.500px;top:97.7px" width="9" height="9" fill="none" stroke="#a8a8a8" stroke-width=".9"><path d="M4.500 4.500c0-1 1.500-1 1.500 0 0 2-3.500 2-3.500-.3 0-2.800 5.500-2.800 5.500.5 0 3.500-6.500 4-7.300.5"/></svg>
  <div class="a" style="left:514px;top:96.7px;width:64.500px;height:10.6px;background:#1e1e1e"></div>
  <span class="t" style="left:519px;top:98.0px;font-size:9px;color:#e4e4e4;letter-spacing:-0.45px/*fit*/;transform-origin:0 0;transform:scaleX(0.9574)/*fitfs*/">None</span>
  <svg style="left:569px;top:100.3px" width="7" height="4"><use href="#ddn" fill="#e0e0e0"/></svg>
  <div class="a" style="left:0;top:108.1px;width:590px;height:12.2px;background:#3b3b3b"></div>
  <div class="a" style="left:2px;top:108.9px;width:9.5px;height:10.6px;background:#1a1a1a"></div>
  <div class="a" style="left:23.5px;top:108.9px;width:9px;height:10.6px;background:#1a1a1a"></div>
  <div class="a" style="left:34px;top:108.9px;width:9.5px;height:10.6px;background:#1a1a1a"></div>
  <svg style="left:2px;top:110.7px" width="10" height="7"><use href="#eye"/></svg>
  <div class="a" style="left:25.500px;top:111.7px;width:5px;height:5px;border-radius:50%;background:#c8c8c8"></div>
  <svg style="left:51px;top:111.7px" width="6" height="6"><use href="#tri-d" fill="#d8d8d8"/></svg>
  <div class="a" style="left:60px;top:109.7px;width:8.500px;height:9px;background:#b5342f"></div>
  <span class="t" style="left:75px;top:110.2px;font-size:9px;color:#b4b4b4">5</span>
  <div class="a" style="left:106.500px;top:108.9px;width:110px;height:10.6px;background:#8c8c8c"></div>
  <span class="t" style="left:98px;top:110.2px;font-size:9px;color:#b0b0b0;font-family:'Liberation Serif',serif">T</span>
  <span class="t" style="left:109px;top:110.2px;font-size:9px;color:#0c0c0c;font-weight:bold;font-size:8.500px;letter-spacing:-0.082px/*fit*/">doyoudo 2</span>
  <div class="a" style="left:219px;top:108.9px;width:61px;height:10.6px;background:#1e1e1e"></div>
  <span class="t" style="left:223.500px;top:110.2px;font-size:9px;color:#e4e4e4;letter-spacing:-0.369px/*fit*/">Normal</span>
  <svg style="left:269px;top:112.5px" width="7" height="4"><use href="#ddn" fill="#e0e0e0"/></svg>
  <div class="a" style="left:283px;top:108.9px;width:8px;height:10.6px;background:#1a1a1a"></div>
  <div class="a" style="left:295px;top:108.9px;width:60px;height:10.6px;background:#1e1e1e"></div>
  <span class="t" style="left:299.500px;top:110.2px;font-size:9px;color:#e4e4e4;letter-spacing:-0.45px/*fit*/;transform-origin:0 0;transform:scaleX(0.9574)/*fitfs*/">None</span>
  <svg style="left:344.500px;top:112.5px" width="7" height="4"><use href="#ddn" fill="#e0e0e0"/></svg>
  <div class="a" style="left:360.3px;top:108.9px;width:9.2px;height:10.6px;background:#1a1a1a"></div>
  <div class="a" style="left:371px;top:108.9px;width:9.2px;height:10.6px;background:#1a1a1a"></div>
  <div class="a" style="left:381.8px;top:108.9px;width:9.2px;height:10.6px;background:#1a1a1a"></div>
  <div class="a" style="left:414px;top:108.9px;width:9px;height:10.6px;background:#1a1a1a"></div>
  <div class="a" style="left:425px;top:108.9px;width:9px;height:10.6px;background:#1a1a1a"></div>
  <div class="a" style="left:435.7px;top:108.9px;width:9px;height:10.6px;background:#1a1a1a"></div>
  <svg style="left:361px;top:110.5px" width="8" height="8" fill="#c4c4c4"><path d="M.5 5c0-4.500 7-4.500 7 0zM0 5.400h8v1.200h-8z"/><circle cx="2.800" cy="3.600" r=".75" fill="#1a1a1a"/><circle cx="5.300" cy="3.600" r=".75" fill="#1a1a1a"/><path d="M2 6.600v1M4 6.600v1M6 6.600v1" stroke="#c4c4c4" stroke-width=".8"/></svg>
  <svg style="left:371.500px;top:110.2px" width="8" height="8" fill="none" stroke="#6c6c6c" stroke-width=".8"><circle cx="4" cy="4" r="1.600"/><path d="M4 .5v1.200M4 6.300v1.200M.5 4h1.200M6.300 4h1.200M1.500 1.500l.9.900M5.600 5.600l.9.900M6.500 1.500l-.9.900M2.400 5.600l-.9.900"/></svg>
  <svg style="left:382.500px;top:109.7px" width="8" height="9"><path d="M.8 8l6.400-7" stroke="#d0d0d0" stroke-width="1.100"/></svg>
  <svg style="left:500.500px;top:109.9px" width="9" height="9" fill="none" stroke="#a8a8a8" stroke-width=".9"><path d="M4.500 4.500c0-1 1.500-1 1.500 0 0 2-3.500 2-3.500-.3 0-2.800 5.500-2.800 5.500.5 0 3.500-6.500 4-7.300.5"/></svg>
  <div class="a" style="left:514px;top:108.9px;width:64.500px;height:10.6px;background:#1e1e1e"></div>
  <span class="t" style="left:519px;top:110.2px;font-size:9px;color:#e4e4e4;letter-spacing:-0.45px/*fit*/;transform-origin:0 0;transform:scaleX(0.9574)/*fitfs*/">None</span>
  <svg style="left:569px;top:112.5px" width="7" height="4"><use href="#ddn" fill="#e0e0e0"/></svg>
  <div class="a" style="left:0;top:131.55px;width:593px;height:1px;background:#1c1c1c"></div>
  <svg style="left:62px;top:123.9px" width="6" height="6"><use href="#tri-d" fill="#c8c8c8"/></svg>
  <span class="t" style="left:75px;top:122.1px;font-size:8.500px;color:#a4a4a4;letter-spacing:0.152px/*fit*/">Text</span>
  <div class="a" style="left:0;top:143.6px;width:593px;height:1px;background:#1c1c1c"></div>
  <span class="t" style="left:98.3px;top:133.9px;font-size:8.500px;color:#a4a4a4;letter-spacing:-0.003px/*fit*/">Source Text</span>
  <div class="a" style="left:0;top:155.65px;width:593px;height:1px;background:#1c1c1c"></div>
  <div class="a" style="left:2px;top:144.8px;width:9.500px;height:10.500px;background:#1a1a1a"></div>
  <svg style="left:2px;top:147.1px" width="10" height="7"><use href="#eye"/></svg>
  <svg style="left:75.0px;top:147.6px" width="6" height="6"><use href="#tri-r" fill="#c8c8c8"/></svg>
  <span class="t" style="left:87px;top:146.3px;font-size:8.500px;color:#a4a4a4;letter-spacing:-0.078px/*fit*/">Path Options</span>
  <div class="a" style="left:0;top:167.7px;width:593px;height:1px;background:#1c1c1c"></div>
  <svg style="left:75.0px;top:159.8px" width="6" height="6"><use href="#tri-r" fill="#c8c8c8"/></svg>
  <span class="t" style="left:87px;top:158.5px;font-size:8.500px;color:#a4a4a4;letter-spacing:-0.028px/*fit*/">More Options</span>
  <div class="a" style="left:0;top:179.75px;width:593px;height:1px;background:#1c1c1c"></div>
  <div class="a" style="left:2px;top:169.2px;width:9.500px;height:10.500px;background:#1a1a1a"></div>
  <svg style="left:2px;top:171.5px" width="10" height="7"><use href="#eye"/></svg>
  <svg style="left:74.5px;top:172.5px" width="6" height="6"><use href="#tri-d" fill="#c8c8c8"/></svg>
  <span class="t" style="left:87px;top:170.7px;font-size:8.500px;color:#a4a4a4;letter-spacing:0.069px/*fit*/">Animator 1</span>
  <div class="a" style="left:0;top:191.8px;width:593px;height:1px;background:#1c1c1c"></div>
  <div class="a" style="left:2px;top:181.2px;width:9.500px;height:10.500px;background:#1a1a1a"></div>
  <svg style="left:2px;top:183.5px" width="10" height="7"><use href="#eye"/></svg>
  <svg style="left:87px;top:184.5px" width="6" height="6"><use href="#tri-d" fill="#c8c8c8"/></svg>
  <span class="t" style="left:99px;top:182.7px;font-size:8.500px;color:#a4a4a4;letter-spacing:-0.193px/*fit*/">Range Selector 1</span>
  <svg style="left:85.500px;top:134px" width="7" height="8" fill="none" stroke="#c0c0c0" stroke-width="1"><circle cx="3.500" cy="4.700" r="2.700"/><path d="M2 .6h3M3.500 .8v1.200M3.500 4.700l1.200-1.200" stroke-width=".9"/></svg>
  <span class="t" style="left:451px;top:121.8px;font-size:8.500px;color:#a4a4a4;letter-spacing:-0.081px/*fit*/">Animate:</span>
  <svg style="left:486.500px;top:121.7px" width="8" height="8"><circle cx="4" cy="4" r="3.800" fill="#d8d8d8"/><path d="M3 2l3 2-3 2z" fill="#222"/></svg>
  <span class="t" style="left:466.500px;top:170.7px;font-size:8.500px;color:#a4a4a4;letter-spacing:-0.075px/*fit*/">Add:</span>
  <svg style="left:486.500px;top:170.7px" width="8" height="8"><circle cx="4" cy="4" r="3.800" fill="#d8d8d8"/><path d="M3 2l3 2-3 2z" fill="#222"/></svg>
  <div class="a" style="left:0;top:190.6px;width:593px;height:12.500px;background:#212121;border-top:1px solid #181818"></div>
  <svg style="left:0;top:192px" width="50" height="11" viewBox="0 565 50 11" fill="none" stroke="#3c9ad6" stroke-width="1">
    <rect x="2.500" y="567" width="5" height="5" fill="#1f5d86"/><rect x="4.500" y="569.500" width="5.500" height="5" fill="#2c7eb4"/>
    <circle cx="18" cy="569.500" r="2.600"/><circle cx="21" cy="572" r="2.600"/>
    <path d="M31.500 566.500c-1.200 0-1.500.5-1.500 1.500v1.500l-1 1 1 1v1.500c0 1 .3 1.500 1.500 1.500M33.500 566.500c1.200 0 1.500.5 1.500 1.500v1.500l1 1-1 1v1.500c0 1-.3 1.500-1.500 1.500" stroke="#a8a8a8" stroke-width="1"/>
  </svg>
  <div class="a" style="left:593px;top:24px;width:1px;height:179px;background:#161616"></div>
  <div class="a" style="left:593.500px;top:58px;width:419px;height:145px;background:#2d2d2d"></div>
  <div class="a" style="left:594px;top:24.2px;width:415px;height:7px;background:#3b3730;border-radius:3px 0 0 3px"></div>
  <div class="a" style="left:596px;top:24.2px;width:201px;height:7px;background:#686868"></div>
  <div class="a" style="left:593.800px;top:24.2px;width:4.200px;height:7px;background:#2d9bd8;border-radius:3px 0 0 3px"></div>
  <div class="a" style="left:795.800px;top:24.2px;width:4.500px;height:7px;background:#2d9bd8;border-radius:0 3.5px 3.5px 0"></div>
  <div class="a" style="left:659px;top:24.2px;width:1.200px;height:7px;background:#d03a3a"></div>
  <div class="a" style="left:593.500px;top:31.5px;width:419px;height:14px;background:#222"></div>
  <div class="a" style="left:598.8px;top:41.5px;width:1px;height:3.500px;background:#6a6a6a"></div>
  <span class="t" style="left:593px;top:32.6px;font-size:8.100px;color:#9a9a9a">0:00f</span>
  <div class="a" style="left:656px;top:41.5px;width:1px;height:3.500px;background:#6a6a6a"></div>
  <span class="t" style="left:650.3px;top:32.6px;font-size:8.100px;color:#9a9a9a">10f</span>
  <div class="a" style="left:713.2px;top:41.5px;width:1px;height:3.500px;background:#6a6a6a"></div>
  <span class="t" style="left:707.3px;top:32.6px;font-size:8.100px;color:#9a9a9a">20f</span>
  <div class="a" style="left:770.4px;top:41.5px;width:1px;height:3.500px;background:#6a6a6a"></div>
  <span class="t" style="left:759px;top:32.6px;font-size:8.100px;color:#9a9a9a">01:00f</span>
  <div class="a" style="left:827.6px;top:41.5px;width:1px;height:3.500px;background:#6a6a6a"></div>
  <span class="t" style="left:822px;top:32.6px;font-size:8.100px;color:#9a9a9a">10f</span>
  <div class="a" style="left:884.8px;top:41.5px;width:1px;height:3.500px;background:#6a6a6a"></div>
  <span class="t" style="left:879px;top:32.6px;font-size:8.100px;color:#9a9a9a">20f</span>
  <div class="a" style="left:942px;top:41.5px;width:1px;height:3.500px;background:#6a6a6a"></div>
  <span class="t" style="left:930.5px;top:32.6px;font-size:8.100px;color:#9a9a9a">02:00f</span>
  <div class="a" style="left:999.2px;top:41.5px;width:1px;height:3.500px;background:#6a6a6a"></div>
  <span class="t" style="left:994px;top:32.6px;font-size:8.100px;color:#9a9a9a">10f</span>
  <div class="a" style="left:594px;top:46px;width:419px;height:10.500px;background:#585858"></div>
  <div class="a" style="left:594px;top:46px;width:4px;height:10.500px;background:#2d9bd8;border-radius:2px"></div>
  <div class="a" style="left:593.500px;top:56.5px;width:419px;height:3.500px;background:#1c1c1c"></div>
  <div class="a" style="left:725.400px;top:57.2px;width:4.600px;height:2px;background:#2fa52f"></div>
  <div class="a" style="left:598.2px;top:59.9px;width:414.79999999999995px;height:12px;background:#695f4b;border-bottom:1px solid rgba(0,0,0,.32)"></div>
  <div class="a" style="left:598.2px;top:72.1px;width:414.79999999999995px;height:12px;background:#695f4b;border-bottom:1px solid rgba(0,0,0,.32)"></div>
  <div class="a" style="left:598.2px;top:84.3px;width:414.79999999999995px;height:12px;background:#733030;border-bottom:1px solid rgba(0,0,0,.32)"></div>
  <div class="a" style="left:598px;top:96.5px;width:29px;height:12px;background:#3a3a3a;border-bottom:1px solid rgba(0,0,0,.3)"></div>
  <div class="a" style="left:626.8px;top:96.5px;width:386.20000000000005px;height:12px;background:#733030;border-bottom:1px solid rgba(0,0,0,.32)"></div>
  <div class="a" style="left:593.500px;top:108.1px;width:419px;height:12.200px;background:#4a4a4a"></div>
  <div class="a" style="left:718.5px;top:108.7px;width:294.5px;height:11.3px;background:#a33d3d;border:1px solid #bb5c5c"></div>
  <svg style="left:598.200px;top:59.9px" width="3" height="3"><path d="M.3 .3h2.500l-2.500 2.500z" fill="#3a3428"/></svg>
  <svg style="left:598.200px;top:72.1px" width="3" height="3"><path d="M.3 .3h2.500l-2.500 2.500z" fill="#3a3428"/></svg>
  <div class="a" style="left:593.500px;top:131.7px;width:419px;height:1px;background:#202020"></div>
  <svg style="left:722.200px;top:122.4px" width="5" height="9"><path d="M0 0h4.800v1.200l-1.400 1.300v3.500l1.400 1.300v1.200h-4.800v-1.200l1.400-1.300v-3.500l-1.400-1.300z" fill="#cf8f8f"/></svg>
  <div class="a" style="left:593.500px;top:143.75px;width:419px;height:1px;background:#202020"></div>
  <svg style="left:722.200px;top:134.45px" width="5" height="9"><path d="M0 0h4.800v1.200l-1.400 1.300v3.500l1.400 1.300v1.200h-4.800v-1.200l1.400-1.300v-3.500l-1.400-1.300z" fill="#cf8f8f"/></svg>
  <div class="a" style="left:593.500px;top:155.8px;width:419px;height:1px;background:#202020"></div>
  <svg style="left:722.200px;top:146.5px" width="5" height="9"><path d="M0 0h4.800v1.200l-1.400 1.300v3.500l1.400 1.300v1.200h-4.800v-1.200l1.400-1.300v-3.500l-1.400-1.300z" fill="#cf8f8f"/></svg>
  <div class="a" style="left:593.500px;top:167.85px;width:419px;height:1px;background:#202020"></div>
  <svg style="left:722.200px;top:158.55px" width="5" height="9"><path d="M0 0h4.800v1.200l-1.400 1.300v3.500l1.400 1.300v1.200h-4.800v-1.200l1.400-1.300v-3.500l-1.400-1.300z" fill="#cf8f8f"/></svg>
  <div class="a" style="left:593.500px;top:179.9px;width:419px;height:1px;background:#202020"></div>
  <svg style="left:722.200px;top:170.6px" width="5" height="9"><path d="M0 0h4.800v1.200l-1.400 1.300v3.500l1.400 1.300v1.200h-4.800v-1.200l1.400-1.300v-3.500l-1.400-1.300z" fill="#cf8f8f"/></svg>
  <div class="a" style="left:593.500px;top:191.95px;width:419px;height:1px;background:#202020"></div>
  <svg style="left:722.200px;top:182.65px" width="5" height="9"><path d="M0 0h4.800v1.200l-1.400 1.300v3.500l1.400 1.300v1.200h-4.800v-1.200l1.400-1.300v-3.500l-1.400-1.300z" fill="#cf8f8f"/></svg>
  <div class="a" style="left:723.900px;top:44px;width:1.400px;height:146.79999999999995px;background:#d81a1a"></div>
  <svg style="left:720.500px;top:34.3px" width="9" height="10"><path d="M.3 .3h7.900v4.200l-2.600 5.200h-2.700l-2.600-5.200z" fill="#38a8e8"/><path d="M2 2h4.500v1.300h-4.500z" fill="#8fd3f7"/><path d="M2.300 4h3.900l-1.500 4h-.9z" fill="#123f5e"/></svg>
  <div class="a" style="left:594px;top:59.5px;width:4.200px;height:48.60000000000002px;background:#2b2b2b"></div>
  <div class="a" style="left:594px;top:120.3px;width:4.200px;height:70.49999999999994px;background:#2b2b2b"></div>
  <div class="a" style="left:1013px;top:20px;width:11px;height:183px;background:#232323"></div>
  <svg style="left:1015.500px;top:47.5px" width="10" height="10"><path d="M.5 .5h7.500v5l-3.700 3.500-3.800-3.500z" fill="#8a8a8a"/></svg>
  <svg style="left:1013.500px;top:60.5px" width="11" height="10" fill="#a8a8a8"><circle cx="4" cy="3.500" r="3"/><rect x="1" y="6" width="7" height="3.500"/><path d="M8.500 3h2.500v5h-2.500z"/></svg>
  <div class="a" style="left:593.500px;top:190.8px;width:430.500px;height:12.500px;background:#222"></div>
  <div class="a" style="left:670px;top:190.8px;width:164px;height:12.500px;background:#282828"></div>
  <div class="a" style="left:834px;top:190.8px;width:179px;height:12.500px;background:#161616"></div>
  <svg style="left:593px;top:191px" width="80" height="12" viewBox="593 564 80 12" fill="#a8a8a8">
    <path d="M597.500 572.500l3-3 3.200 3z"/><path d="M615.500 570.300h30.500" stroke="#3c3c3c" stroke-width="1"/><path d="M629.500 574.700v-6l3.500-2.700 3.500 2.700v6z" fill="#808080"/>
    <path d="M655.300 572.500l3.700-5 2.200 2.700 2.300-3.200 3.700 5.500z"/>
  </svg>
</div>
</div>
</body>
</html>
